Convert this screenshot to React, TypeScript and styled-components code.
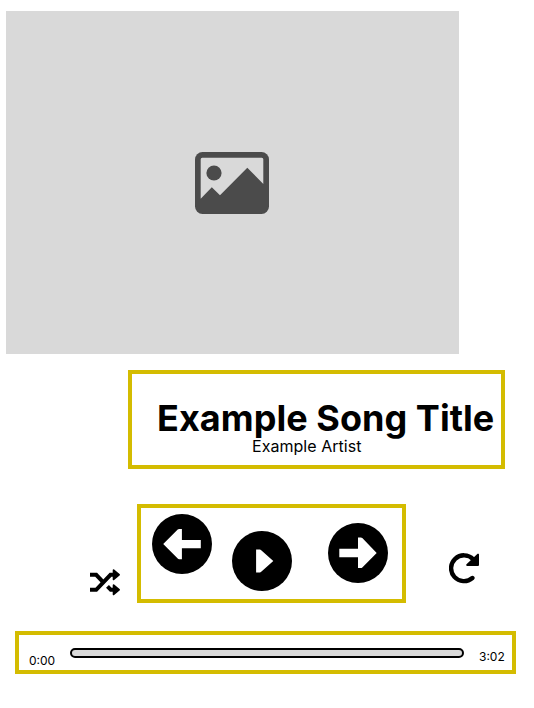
import React from "react";
import styled, { createGlobalStyle } from "styled-components";

const GlobalStyle = createGlobalStyle`
  *, *::before, *::after { box-sizing: border-box; }
  body {
    margin: 0;
    background: #fff;
    color: #000;
    font-family: Inter, "Liberation Sans", sans-serif;
  }
`;

const Player = styled.main`
  display: flex;
  flex-direction: column;
  align-items: flex-start;
  width: 534px;
  height: 708px;
  padding: 11px 0 0 6px;
`;

const Cover = styled.div`
  display: flex;
  justify-content: center;
  align-items: center;
  width: 453px;
  height: 343px;
  padding: 1px 1px 0 0;
  background: #d9d9d9;

  svg { display: block; }
`;

const Panel = styled.section`
  border: 4px solid #d4bc00;
`;

const TrackInfo = styled(Panel)`
  display: flex;
  flex-direction: column;
  width: 377px;
  height: 99px;
  margin: 16px 0 0 122px;
  padding: 26px 0 0 25px;
`;

const Title = styled.h1`
  margin: 0;
  font-size: 36px;
  font-weight: 700;
  line-height: 36px;
  letter-spacing: 0.05px;
  white-space: nowrap;
`;

const Artist = styled.p`
  margin: 0 0 0 95px;
  font-size: 16px;
  line-height: 20px;
  letter-spacing: 0.04px;
`;

const Controls = styled.div`
  display: flex;
  align-items: flex-start;
  margin: 35px 0 0 84px;
`;

const Transport = styled(Panel)`
  display: flex;
  align-items: flex-start;
  width: 269px;
  height: 99px;
  margin-left: 17px;
  padding-left: 11px;
`;

const RoundButton = styled.button<{ $top: number; $gap?: number }>`
  width: 60px;
  height: 60px;
  margin: ${(p) => p.$top}px 0 0 ${(p) => p.$gap ?? 0}px;
  padding: 0;
  border: 0;
  border-radius: 50%;
  background: #000;
  color: #fff;

  svg { display: block; }
`;

const IconButton = styled.button<{ $top: number; $gap?: number }>`
  margin: ${(p) => p.$top}px 0 0 ${(p) => p.$gap ?? 0}px;
  padding: 0;
  border: 0;
  background: none;
  color: #000;

  svg { display: block; }
`;

const Timeline = styled(Panel)`
  display: flex;
  align-items: flex-start;
  width: 501px;
  height: 43px;
  margin: 28px 0 0 9px;
  padding-left: 10px;
`;

const Time = styled.span<{ $top: number }>`
  width: 26px;
  margin-top: ${(p) => p.$top}px;
  font-size: 12px;
  line-height: 15px;
  white-space: nowrap;
`;

const Track = styled.div`
  width: 394px;
  height: 10px;
  margin: 13px 15px 0;
  border: 2px solid #000;
  border-radius: 5px;
  background: #d9d9d9;
`;

const PictureIcon = () => (
  <svg width="74" height="62" viewBox="0 0 74 62">
    <rect width="74" height="62" rx="7.5" fill="#4b4b4b" />
    <path
      d="M7.2 5.7H66.8Q68.3 5.7 68.3 7.2V32L52.3 15.7L25 43.3L16.8 35.3L5.7 46.8V7.2Q5.7 5.7 7.2 5.7Z"
      fill="#d9d9d9"
    />
    <circle cx="19" cy="21" r="7.6" fill="#4b4b4b" />
  </svg>
);

const ShuffleIcon = () => (
  <svg width="30" height="28" viewBox="0 0 30 28">
    <g fill="none" stroke="currentColor" strokeWidth="4">
      <path d="M0 20.8H6.2L20.5 5.8H25" />
      <path d="M0 5.8H6.2L13.4 13.4" />
      <path d="M17.5 17.3L20.8 20.8H25" />
    </g>
    <path
      d="M23.6 1.2L29 5.8L23.6 10.4ZM23.6 16.2L29 20.8L23.6 25.4Z"
      fill="currentColor"
      stroke="currentColor"
      strokeWidth="1.8"
      strokeLinejoin="round"
    />
  </svg>
);

const PreviousIcon = () => (
  <svg width="60" height="60" viewBox="0 0 60 60" fill="currentColor">
    <path d="M11.2 30L25.7 15.5Q26.3 14.9 27.2 14.9H29.9V26.1H48.8V34.3H29.9V45.2H27.2Q26.3 45.2 25.7 44.6Z" />
  </svg>
);

const PlayIcon = () => (
  <svg width="60" height="60" viewBox="0 0 60 60" fill="currentColor">
    <path d="M24.1 18.6H27.8Q28.6 18.6 29.2 19.2L41.3 30L29.2 40.8Q28.6 41.4 27.8 41.4H24.1Z" />
  </svg>
);

const NextIcon = () => (
  <svg width="60" height="60" viewBox="0 0 60 60" fill="currentColor">
    <path d="M11.3 25.8H30V14.4H32.8Q33.7 14.4 34.3 15L48.7 29.9L34.3 44.5Q33.7 45.1 32.8 45.1H30V34.2H11.3Z" />
  </svg>
);

const RepeatIcon = () => (
  <svg width="31" height="31" viewBox="0 0 31 31">
    <path
      d="M24.2 6.2A12.9 12.9 0 1 0 23.4 25"
      fill="none"
      stroke="currentColor"
      strokeWidth="4.4"
      strokeLinecap="round"
    />
    <path
      d="M29 1.6V12H18.2Z"
      fill="currentColor"
      stroke="currentColor"
      strokeWidth="2"
      strokeLinejoin="round"
    />
  </svg>
);

export default function App() {
  return (
    <>
      <GlobalStyle />
      <Player>
        <Cover>
          <PictureIcon />
        </Cover>
        <TrackInfo>
          <Title>Example Song Title</Title>
          <Artist>Example Artist</Artist>
        </TrackInfo>
        <Controls>
          <IconButton $top={65} aria-label="Shuffle">
            <ShuffleIcon />
          </IconButton>
          <Transport>
            <RoundButton $top={6} aria-label="Previous">
              <PreviousIcon />
            </RoundButton>
            <RoundButton $top={23} $gap={20} aria-label="Play">
              <PlayIcon />
            </RoundButton>
            <RoundButton $top={15} $gap={36} aria-label="Next">
              <NextIcon />
            </RoundButton>
          </Transport>
          <IconButton $top={49} $gap={43} aria-label="Repeat">
            <RepeatIcon />
          </IconButton>
        </Controls>
        <Timeline>
          <Time $top={18}>0:00</Time>
          <Track />
          <Time $top={14}>3:02</Time>
        </Timeline>
      </Player>
    </>
  );
}
